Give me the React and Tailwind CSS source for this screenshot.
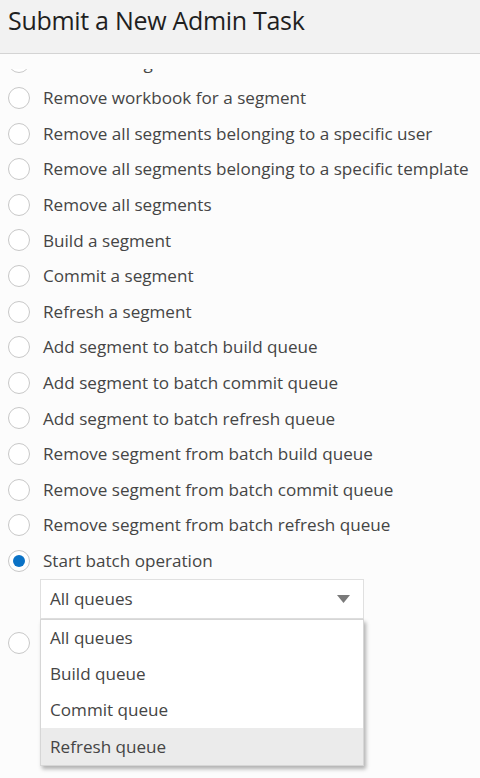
import React from 'react';

const options = [
    'Remove a segment',
    'Remove workbook for a segment',
    'Remove all segments belonging to a specific user',
    'Remove all segments belonging to a specific template',
    'Remove all segments',
    'Build a segment',
    'Commit a segment',
    'Refresh a segment',
    'Add segment to batch build queue',
    'Add segment to batch commit queue',
    'Add segment to batch refresh queue',
    'Remove segment from batch build queue',
    'Remove segment from batch commit queue',
    'Remove segment from batch refresh queue',
];

const queues = ['All queues', 'Build queue', 'Commit queue', 'Refresh queue'];

const Radio = ({ checked }) => (
    <span className="w-[22px] h-[22px] rounded-full border border-[#c8c8c8] bg-white flex items-center justify-center shrink-0">
        {checked && <span className="w-[12px] h-[12px] rounded-full bg-[#0a72c6]" />}
    </span>
);

const Row = ({ label, checked }) => (
    <div className="h-[35.6px] flex items-center gap-[13px] pl-2">
        <Radio checked={checked} />
        <span className="text-[17.1px] text-[#454545] whitespace-nowrap">{label}</span>
    </div>
);

const App = () => {
    return (
        <div className="w-[480px] h-[778px] overflow-hidden bg-[#fcfcfc] flex flex-col" style={{ fontFamily: '"Open Sans", "Noto Sans", sans-serif' }}>
            <header className="h-[54px] shrink-0 bg-[#f2f2f2] border-b border-[#d4d4d4] flex items-center px-2 pb-[12px]">
                <h1 className="text-[25px] text-[#1f1f1f] tracking-[-0.3px]">Submit a New Admin Task</h1>
            </header>
            <div className="h-[14.8px] shrink-0 bg-[#fcfcfc]" />

            <div className="flex-1 overflow-hidden">
                <div className="-mt-[24.2px]">
                    {options.map((o) => (
                        <Row key={o} label={o} />
                    ))}
                    <Row label="Start batch operation" checked />

                    <div className="relative pl-10 w-[364px] mb-[7px]">
                        <div className="h-[40px] border border-[#e0e0e0] bg-white flex items-center justify-between pl-[9px] pr-[13px]">
                            <span className="text-[17.1px] text-[#454545]">All queues</span>
                            <svg width="13" height="8" viewBox="0 0 13 8">
                                <path d="M0 0 L13 0 L6.5 8 Z" fill="#7a7a7a" />
                            </svg>
                        </div>

                        <div className="absolute left-10 right-0 top-full z-10 bg-white border border-[#d6d6d6] shadow-[2px_3px_4px_rgba(0,0,0,0.3)]">
                            {queues.map((q, i) => (
                                <div key={q} className={`h-[36.3px] flex items-center px-[9px] text-[17.1px] text-[#454545] ${i === 3 ? 'bg-[#ebebeb]' : ''}`}>
                                    {q}
                                </div>
                            ))}
                        </div>
                    </div>

                    <Row label="Stop batch operation" />
                </div>
            </div>
        </div>
    );
};

export default App;
